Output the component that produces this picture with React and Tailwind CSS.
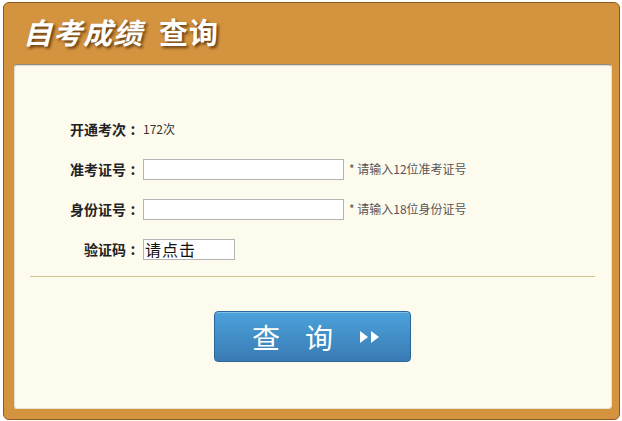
import React from 'react';

const cjk = { fontFamily: '"Noto Sans CJK SC", "Liberation Sans", sans-serif' };

const Row = ({ label, children }) => (
  <div className="flex h-[40px] items-center">
    <div className="w-[126px] flex justify-end items-center text-[14px] font-bold text-[#222]">
      <span>{label}</span>
      <span className="w-[14px] text-center text-[15px]">:</span>
    </div>
    <div className="ml-[3px] flex items-center">{children}</div>
  </div>
);

const Arrows = () => (
  <svg width="22" height="14" viewBox="0 0 22 14" className="ml-[26px]">
    <polygon points="1,1 9,7 1,13" fill="#fff" />
    <polygon points="12,1 20,7 12,13" fill="#fff" />
  </svg>
);

export default function App() {
  return (
    <div className="w-[622px] h-[421px] bg-white pt-[2px] pl-[3px]" style={cjk}>
      <div className="w-[617px] h-[418px] rounded-[6px] border border-[#8a5a22] bg-[#d4943f] flex flex-col">
        {/* header */}
        <div className="h-[61px] flex items-center pl-[19px] pb-[4px]">
          <h1 className="text-[29px] font-bold text-white leading-none tracking-[1px] [text-shadow:2px_2px_3px_rgba(60,30,0,0.75)]">
            <span className="italic">自考成绩</span>
            <span className="ml-[16px]">查询</span>
          </h1>
        </div>

        {/* panel */}
        <div className="ml-[9px] mr-[7px] h-[345px] rounded-[4px] border border-t-[#8e8a80] border-l-[#a09a8c] border-r-[#e8e2cc] border-b-[#e8e2cc] bg-[#fdfaee] shadow-[inset_1px_1px_1px_rgba(0,0,0,0.12)] pt-[44px]">
          <Row label="开通考次">
            <span className="text-[12px] text-[#333]">172次</span>
          </Row>
          <Row label="准考证号">
            <input className="w-[201px] h-[21px] border border-[#b3b3b3] bg-white outline-none" />
            <span className="ml-[5px] text-[12px] text-[#555]">* 请输入12位准考证号</span>
          </Row>
          <Row label="身份证号">
            <input className="w-[201px] h-[21px] border border-[#b3b3b3] bg-white outline-none" />
            <span className="ml-[5px] text-[12px] text-[#555]">* 请输入18位身份证号</span>
          </Row>
          <Row label="验证码">
            <div className="w-[92px] h-[21px] border border-[#b3b3b3] bg-white pl-[1px] text-[16px] leading-[19px] tracking-[1px] text-[#111]">
              请点击
            </div>
          </Row>

          <div className="mx-[16px] mt-[7px] border-t border-[#cfc58f]" />

          <div className="flex justify-center mt-[34px]">
            <button className="w-[197px] h-[51px] rounded-[4px] border border-[#2b6699] bg-gradient-to-b from-[#4ba2db] to-[#3a7bb4] shadow-[inset_0_1px_0_rgba(255,255,255,0.3)] flex items-center justify-center text-white text-[28px] leading-none pl-[8px]">
              <span>查</span>
              <span className="ml-[25px]">询</span>
              <Arrows />
            </button>
          </div>
        </div>
      </div>
    </div>
  );
}
